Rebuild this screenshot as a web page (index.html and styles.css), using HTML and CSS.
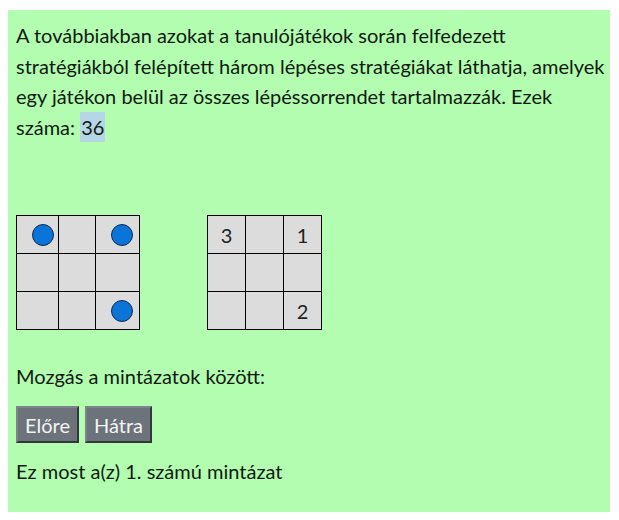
FILE: index.html
```html
<!DOCTYPE html>
<html lang="hu">
<head>
<meta charset="utf-8">
<link rel="stylesheet" href="styles.css">
</head>
<body>
<div class="panel">
  <p class="intro">A továbbiakban azokat a tanulójátékok során felfedezett<br>stratégiákból felépített három lépéses stratégiákat láthatja, amelyek<br>egy játékon belül az összes lépéssorrendet tartalmazzák. Ezek<br>száma: <span class="count">36</span></p>
  <div class="boards">
    <div class="board board-dots">
      <div class="cell"><span class="dot"></span></div>
      <div class="cell"></div>
      <div class="cell"><span class="dot"></span></div>
      <div class="cell"></div>
      <div class="cell"></div>
      <div class="cell"></div>
      <div class="cell"></div>
      <div class="cell"></div>
      <div class="cell"><span class="dot"></span></div>
    </div>
    <div class="board board-nums">
      <div class="cell">3</div>
      <div class="cell"></div>
      <div class="cell">1</div>
      <div class="cell"></div>
      <div class="cell"></div>
      <div class="cell"></div>
      <div class="cell"></div>
      <div class="cell"></div>
      <div class="cell">2</div>
    </div>
  </div>
  <p class="label">Mozgás a mintázatok között:</p>
  <div class="buttons">
    <button class="btn">Előre</button>
    <button class="btn">Hátra</button>
  </div>
  <p class="status">Ez most a(z) 1. számú mintázat</p>
</div>
</body>
</html>
```
FILE: styles.css
```css
html, body {
  margin: 0;
  padding: 0;
  background: #ffffff;
}
body {
  font-family: Lato, "Noto Sans", sans-serif;
  font-size: 20px;
  color: #111a11;
}
.panel {
  box-sizing: border-box;
  width: 602px;
  height: 502px;
  margin: 10px 0 0 8px;
  padding: 10px 2px 10px 8px;
  background: #b2fdb0;
}
.intro {
  margin: 0;
  line-height: 30.5px;
  white-space: nowrap;
}
.count {
  background: #b4d6e6;
  padding: 3px 1px;
}
.boards {
  display: flex;
  gap: 67px;
  margin-top: 73px;
}
.board {
  display: grid;
  grid-template-rows: repeat(3, 38px);
  border-top: 1px solid #000;
  border-left: 1px solid #000;
  background: #dcdcdc;
}
.board-dots {
  grid-template-columns: 42px 37px 44px;
}
.board-nums {
  grid-template-columns: repeat(3, 38px);
}
.cell {
  box-sizing: border-box;
  border-right: 1px solid #000;
  border-bottom: 1px solid #000;
  display: flex;
  align-items: center;
}
.board-dots .cell {
  padding-left: 15px;
}
.board-nums .cell {
  justify-content: center;
  font-size: 20px;
  color: #222;
}
.dot {
  width: 20px;
  height: 20px;
  border-radius: 50%;
  background: #0b74d8;
  border: 1px solid #0a2a55;
}
.label {
  margin: 34px 0 0;
  line-height: 24px;
}
.buttons {
  display: flex;
  gap: 6px;
  margin-top: 18px;
}
.btn {
  font-family: inherit;
  font-size: 20px;
  color: #f4f4f4;
  background: #6c737b;
  border: 2px solid;
  border-color: #7d838b #33373c #33373c #7d838b;
  padding: 0 7px;
  height: 37px;
  margin: 0;
}
.status {
  margin: 16px 0 0;
  line-height: 24px;
}
```
